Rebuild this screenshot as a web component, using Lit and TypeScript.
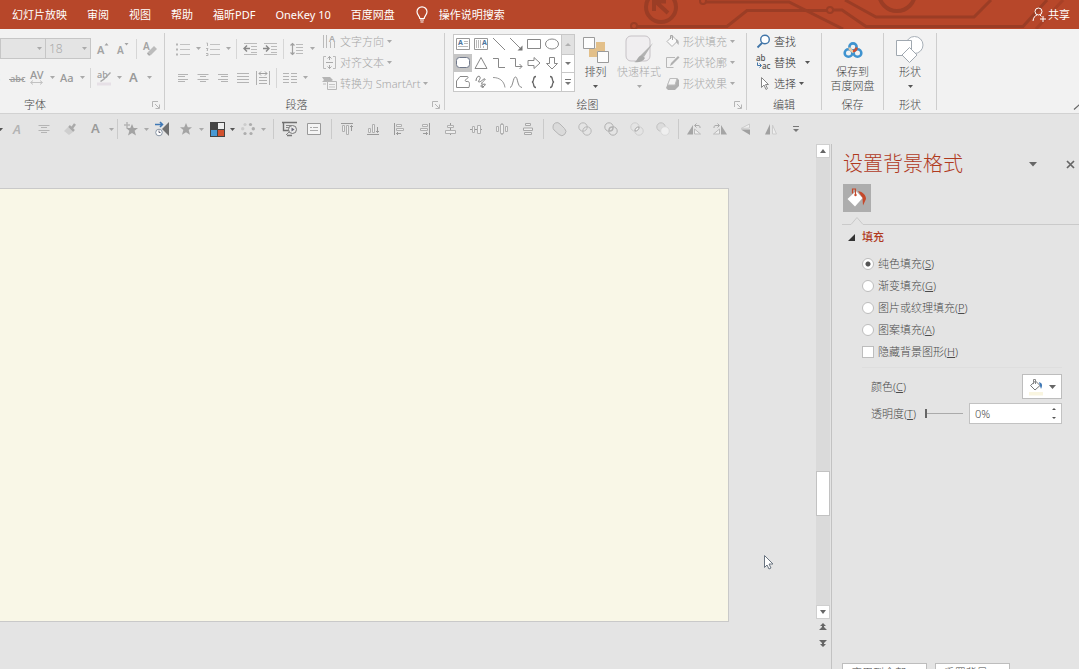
import { LitElement, html, css, svg, nothing, TemplateResult } from "lit";
import { customElement, state } from "lit/decorators.js";
import { classMap } from "lit/directives/class-map.js";

/* Every glyph is drawn on its own small canvas: [width, height, drawing]. */
type Glyph = [number, number, unknown];

const G = "#a3a3a3";
const L = "#c2c2c2";

const glyphs: Record<string, Glyph> = {
  bulb: [14, 18, svg`<path d="M4.8 12.5C4.8 10 2 9 2 5.8A5 5 0 0 1 12 5.800C12 9 9.200 10 9.200 12.500Z" fill="none" stroke="#fff" stroke-width="1.200"/><path d="M5 14h4M5.500 16h3" stroke="#fff" stroke-width="1.200"/>`],
  share: [14, 15, svg`<circle cx="6.500" cy="4.500" r="3.500" fill="none" stroke="#fff"/><path d="M1 14c.5-3.500 2-5.500 4-6M8 8l1.500 1.500M8 12h6M11 9v6" fill="none" stroke="#fff"/>`],
  grow: [14, 14, svg`<text x="1" y="12" font-size="11" font-weight="600" fill="${G}">A</text><path d="M8.500 3.500 10.500 1l2 2.500z" fill="${G}"/>`],
  shrink: [14, 14, svg`<text x="1" y="12" font-size="10" font-weight="600" fill="${G}">A</text><path d="M8.500 1h4l-2 2.500z" fill="${G}"/>`],
  erase: [14, 16, svg`<text x="0" y="9" font-size="10" font-weight="600" fill="${G}">A</text><path d="m5 11 6-6 3 3-6 6z" fill="#bcbcbc"/><path d="m5 11 3 3-2 .8-2-2z" fill="#aaa"/>`],
  shadowS: [10, 14, svg`<text x="2" y="11" font-size="11" font-weight="700" fill="${G}">S</text>`],
  strike: [16, 14, svg`<text x="1" y="11" font-size="9" font-weight="600" fill="${G}">abc</text><path d="M0 8.500h15" stroke="#999"/>`],
  spacing: [16, 16, svg`<text x="1" y="9" font-size="11" font-weight="500" fill="#999">AV</text><path d="M2 12.500h11M4 10.500l-2.500 2 2.500 2M11 10.500l2.500 2-2.500 2" fill="none" stroke="${L}"/>`],
  caseA: [16, 14, svg`<text x="1" y="11" font-size="11" font-weight="500" fill="#999">Aa</text>`],
  highlight: [16, 16, svg`<text x="1" y="8" font-size="9" font-weight="500" fill="#999">ab</text><path d="m4 11 3-2 7-7 1 1-7 7-3 2z" fill="#a8a8a8"/><path d="M1 12.500h14v3H1z" fill="#e6e0e6"/>`],
  fontA: [14, 16, svg`<text x="2" y="12" font-size="13" font-weight="600" fill="#9a9a9a">A</text>`],
  bullets: [16, 14, svg`<path d="M5 2.500h10M5 7.500h10M5 12.500h10" stroke="${L}"/><path d="M1 1.500h2v2H1zM1 6.500h2v2H1zM1 11.500h2v2H1z" fill="#b5b5b5"/>`],
  numbers: [16, 14, svg`<path d="M5 2.500h10M5 7.500h10M5 12.500h10" stroke="${L}"/><path d="M1.500 1h1v3M1 6.500h2l-1 2h1M1 11.500h2v2H1" fill="none" stroke="#b5b5b5"/>`],
  outdent: [15, 12, svg`<path d="M1 .5h13M8 3.500h6M8 6.500h6M8 9.500h6M1 11.500h13" stroke="#bbb"/><path d="M7 5.500H1.500M4 2.500l-3 3 3 3" fill="none" stroke="#888" stroke-width="1.400"/>`],
  indent: [15, 12, svg`<path d="M1 .5h13M8 3.500h6M8 6.500h6M8 9.500h6M1 11.500h13" stroke="#bbb"/><path d="M0 5.500h5.500M3 2.500l3 3-3 3" fill="none" stroke="#888" stroke-width="1.400"/>`],
  lineGap: [14, 14, svg`<path d="M6 2.500h7M6 5.500h7M6 8.500h7M6 11.500h7" stroke="#bbb"/><path d="M2.500 1v12M.5 3.500l2-2 2 2M.5 10.500l2 2 2-2" fill="none" stroke="#a0a0a0" stroke-width="1.200"/>`],
  left: [12, 10, svg`<path d="M1 1.500h10M1 3.500h7M1 6.500h10M1 8.500h7" stroke="#b4b4b4"/>`],
  center: [12, 10, svg`<path d="M.5 1.500h11M3 3.500h6M.5 6.500h11M3 8.500h6" stroke="#b4b4b4"/>`],
  right: [12, 10, svg`<path d="M1 1.500h10M4 3.500h7M1 6.500h10M4 8.500h7" stroke="#b4b4b4"/>`],
  justify: [12, 10, svg`<path d="M0 .5h12M0 3.500h12M0 6.500h12M0 9.500h12" stroke="#b4b4b4"/>`],
  spread: [14, 14, svg`<path d="M.5 0v14M13.500 0v14M3 6.500h8M3 9.500h8M3 12.500h8" stroke="#b0b0b0"/><path d="M3 2.500h8M5 .5l-2 2 2 2M9 .5l2 2-2 2" fill="none" stroke="#a0a0a0"/>`],
  columns: [14, 10, svg`<path d="M0 .5h6M0 3.500h6M0 6.500h6M0 9.500h6M8 .5h6M8 3.500h6M8 6.500h6M8 9.500h6" stroke="#b4b4b4"/>`],
  textDir: [15, 15, svg`<path d="M1.500 1v13M4.500 1v13M8.500 8v6M12.500 8v6" stroke="#bbb"/><text x="7" y="8" font-size="9" font-weight="600" fill="#aaa">A</text>`],
  alignText: [15, 15, svg`<path d="M4 1.500H1.500v12H4M11 1.500h2.500v12H11" fill="none" stroke="#bbb"/><path d="M4 7.500h7M7.500 1v4M7.500 10v4M5.500 3.500l2-2 2 2M5.500 11.500l2 2 2-2" fill="none" stroke="#aaa"/>`],
  smart: [15, 15, svg`<path d="M0 1h8l3 3-3 2H0l2-2z" fill="#b5b5b5"/><path d="M5.500 5.500h9v8h-9z" fill="#f2f2f2" stroke="#b8b8b8"/><path d="M7 8.500h6M7 11h6" stroke="#c5c5c5"/><path d="M1 8h3" fill="none" stroke="#bbb"/>`],
  launch: [8, 8, svg`<path d="M.5 6V.5H6M3 3l4 4M7.500 3.500v4h-4" fill="none" stroke="#b5b5b5"/>`],
  arrange: [26, 27, svg`<path d="M13 5h9v9h-8v6H6v-9h7z" fill="#e3c08a"/><path d="M.5.500h11v11H.5zM14.500 14.500h11v11h-11z" fill="#fdfdfd" stroke="#9b9b9b"/>`],
  quick: [28, 30, svg`<rect x="1" y="1" width="24" height="25" rx="5" fill="#f0eef0" stroke="#c6c2c6"/><path d="m28 8-9 14-3-2z" fill="#b3b3b3"/><path d="M17 20l3 3c-2 4-7 5-11 4 4-1 3-6 8-7z" fill="#ababab"/>`],
  bucket: [15, 15, svg`<path d="M2 7.500 7.500 2l5 5-5.500 5.500z" fill="#fafafa" stroke="#b3b3b3"/><path d="M5.500 5V1.500h2V6" fill="none" stroke="#a8a8a8"/><path d="M11 5c3 1 3 3 2.500 6L11 8z" fill="#b3b3b3"/>`],
  outline: [15, 15, svg`<path d="M10 2.500H1.500v10h7" fill="none" stroke="#b8b8b8"/><path d="m5 11 1-3 7-7 1.500 1.500-7 7z" fill="#b0b0b0"/>`],
  effects: [15, 15, svg`<path d="M5 2h7l2 2v6l-4 4H3l-2-2z" fill="#b0b0b0"/><path d="M5 2.500h7L10 9H2.500z" fill="#f4f4f4" stroke="#bcbcbc"/>`],
  find: [15, 15, svg`<circle cx="9" cy="5.500" r="4.300" fill="#fff" stroke="#4175a8" stroke-width="1.400"/><path d="m6 9-4.500 4.500" stroke="#4175a8" stroke-width="1.800"/>`],
  replace: [15, 15, svg`<text x="0" y="6" font-size="8" font-weight="500" fill="#555">ab</text><text x="6" y="14" font-size="8" font-weight="500" fill="#555">ac</text><path d="M1.500 7.500v3H5M3.500 8.500l2 2-2 2" fill="none" stroke="#4175a8"/>`],
  select: [15, 15, svg`<path d="M5.500 1.500v10l2.500-2.500 2 4.500 1.500-1-2-4h3z" fill="#fff" stroke="#888"/>`],
  cloud: [20, 17, svg`<g fill="none" stroke-width="2.600"><circle cx="5.500" cy="11" r="3.800" stroke="#3f93d0"/><circle cx="14.500" cy="11" r="3.800" stroke="#3f93d0"/><circle cx="10" cy="5" r="3.600" stroke="#3f93d0"/><path d="M6.500 5.500c0 3 3 3 4 5" stroke="#e6c9a4"/><path d="M13.500 5.500c0 2-1.500 3.500-3.500 3.500" stroke="#d2502f"/></g>`],
  shapes: [28, 28, svg`<circle cx="18.500" cy="9" r="8.500" fill="#fff" stroke="#a8b0b8"/><path d="M.5 4.500h15v15H.500z" fill="#fff" stroke="#a0a8b0"/><path d="m13.500 11.500 7.500 7.500-7.500 7.500L6 19z" fill="#fff" stroke="#a0a8b0"/>`],
  /* shape gallery */
  sText: [16, 14, svg`<path d="M1.500 1.500h13v11h-13z" fill="#fff" stroke="#999"/><text x="3" y="8" font-size="7" font-weight="700" fill="#4d759e">A</text><path d="M9 4.500h4M9 6.500h4M3 9.500h10" stroke="#bbb"/>`],
  sVText: [16, 14, svg`<path d="M1.500 1.500h13v11h-13z" fill="#fff" stroke="#999"/><text x="9" y="8" font-size="7" font-weight="700" fill="#4d759e">A</text><path d="M3.500 3v8M5.500 3v8M7.500 3v8M10.500 9v2" stroke="#bbb"/>`],
  sLine: [16, 14, svg`<path d="m2 1 12 12" stroke="#888"/>`],
  sArrow: [16, 14, svg`<path d="m2 1 12 12" stroke="#888"/><path d="M14.500 13.500v-5l-5 5z" fill="#777"/>`],
  sRect: [16, 14, svg`<path d="M1.500 2.500h13v9h-13z" fill="#fff" stroke="#888"/>`],
  sOval: [16, 14, svg`<ellipse cx="8" cy="7" rx="6.500" ry="5" fill="#fff" stroke="#888"/>`],
  sRound: [16, 14, svg`<rect x="1.500" y="1.500" width="13" height="10" rx="3" fill="#fff" stroke="#70788a"/>`],
  sTri: [16, 14, svg`<path d="m8 1.500 6 11H2z" fill="#fff" stroke="#888"/>`],
  sElbow: [16, 14, svg`<path d="M2 2.500h5.500v9H14" fill="none" stroke="#888"/>`],
  sElbowA: [16, 14, svg`<path d="M2 2.500h5.500v8H14M11.500 8l2.500 2.500-2.500 2.500" fill="none" stroke="#888"/>`],
  sRight: [16, 14, svg`<path d="M2 4.500h6V1.500l6 5.500-6 5.500V9.500H2z" fill="#fff" stroke="#888"/>`],
  sDown: [16, 14, svg`<path d="M5.500 1.500h5v6h3L8 13 2.500 7.500h3z" fill="#fff" stroke="#888"/>`],
  sFree: [16, 14, svg`<path d="M5 1.500h7c2 0 1 2-.5 2.500-2 .7-1.500 3 .5 2.500 2.500-.5 3 2 2 6H1.500V6z" fill="#fff" stroke="#888"/>`],
  sScrib: [16, 14, svg`<path d="M3 6c0-4 3-6 4-4S4 7 6 7s5-4 6-3-5 4-3 5 4-1 3 1-4 3-4 1 2-1 2 2" fill="none" stroke="#777"/>`],
  sArc: [16, 14, svg`<path d="M2 2.500c6 0 11 3 12 10" fill="none" stroke="#999"/>`],
  sCurve: [16, 14, svg`<path d="M2 12.500C5 12 5 2 7.500 2S9 12 14 12.500" fill="none" stroke="#888"/>`],
  sLB: [16, 14, svg`<path d="M10 1.500c-4 0-1 5-4 5.500 3 .5 0 5.500 4 5.500" fill="none" stroke="#666" stroke-width="1.300"/>`],
  sRB: [16, 14, svg`<path d="M6 1.500c4 0 1 5 4 5.500-3 .5 0 5.500-4 5.500" fill="none" stroke="#666" stroke-width="1.300"/>`],
  up: [6, 3, svg`<path d="M0 3h6L3 0z" fill="#b0b0b0"/>`],
  down: [6, 3, svg`<path d="M0 0h6L3 3z" fill="#777"/>`],
  more: [6, 6, svg`<path d="M0 .5h6" stroke="#777"/><path d="M0 3h6L3 6z" fill="#777"/>`],
  /* quick access bar */
  qItalic: [16, 16, svg`<text x="3" y="13" font-size="13" font-style="italic" font-weight="600" fill="#b3b3b3">A</text>`],
  qBrush: [14, 14, svg`<path d="m1 9 4-4 5 5-4 3z" fill="#cfcfcf"/><path d="m6 4 5 5M9 6l3-4" stroke="#aaa" stroke-width="2.500"/>`],
  qStarAdd: [16, 16, svg`<path d="m9 3 1.700 4H15l-3.400 2.800 1.400 4.700L9 12l-4 2.500 1.400-4.700L3 7h4.300z" fill="#a3a3a3"/><path d="M4 1v6M1 4h6" stroke="#b5b5b5" stroke-width="1.500"/>`],
  qAnim: [16, 16, svg`<path d="M15 1v14L8 8z" fill="#707070"/><path d="M1 3.500h7M6 1l2.500 2.500L6 6" fill="none" stroke="#3f78b5" stroke-width="1.600"/><circle cx="5" cy="11.500" r="3.300" fill="#fff" stroke="#8895a5"/><path d="M5 9.500v2h1.500" fill="none" stroke="#667"/>`],
  qStar: [14, 14, svg`<path d="m7 1 1.800 4.200H13L9.700 8l1.300 4.800L7 10.200l-4 2.600L4.300 8 1 5.200h4.200z" fill="#a5a5a5"/>`],
  qColors: [15, 15, svg`<path d="M0 0h15v15H0z" fill="#444"/><path d="M8 1h6v6H8z" fill="#eee"/><path d="M1 8h6v6H1z" fill="#4a9ad4"/><path d="M8 8h6v6H8z" fill="#d2522f"/>`],
  qDots: [14, 14, svg`<g fill="#adadad"><circle cx="4" cy="2.500" r="1.600" fill="#ccc"/><circle cx="9.500" cy="2.500" r="1.600"/><circle cx="12.300" cy="6.800" r="1.700"/><circle cx="1.700" cy="6.800" r="1.700" fill="#ccc"/><circle cx="4" cy="11.500" r="1.600"/><circle cx="10" cy="11.500" r="1.600"/></g>`],
  qShow: [16, 16, svg`<path d="M0 1.500h15M1.500 2v7.500h6" fill="none" stroke="#707070" stroke-width="1.400"/><path d="M4 4.500h6M4 6.500h3M4 14l3-3" stroke="#888"/><circle cx="10.500" cy="8.500" r="4" fill="#e8e8e8" stroke="#777"/><path d="m9.500 6.500 3 2-3 2z" fill="#667"/><path d="M5 14.500h5" stroke="#777" stroke-width="1.500"/>`],
  qPane: [14, 12, svg`<path d="M.5.500h13v11H.5z" fill="#f4f4f4" stroke="#999"/><path d="M3 4.500h2M6 4.500h5M3 7.500h8" stroke="#aaa"/>`],
  qTop: [14, 14, svg`<path d="M1 1.500h12" stroke="#999"/><path d="M2.500 3.500h2v6h-2zM6.500 3.500h2v9h-2z" fill="#eee" stroke="#b0b0b0"/><path d="M11.500 9V3.500M10 5l1.500-1.500L13 5" fill="none" stroke="#999"/>`],
  qBottom: [14, 14, svg`<path d="M1 12.500h12" stroke="#999"/><path d="M2.500 6.500h2v4h-2zM6.500 2.500h2v8h-2z" fill="#eee" stroke="#b0b0b0"/><path d="M11.500 5v5.500M10 9l1.500 1.500L13 9" fill="none" stroke="#999"/>`],
  qLeft: [14, 14, svg`<path d="M2.500 1v12" stroke="#999"/><path d="M4.500 2.500h5v2h-5zM4.500 6.500h7v2h-7z" fill="#eee" stroke="#b0b0b0"/><path d="M9 11.500H4.500M6 10l-1.500 1.500L6 13" fill="none" stroke="#999"/>`],
  qRight: [14, 14, svg`<path d="M11.500 1v12" stroke="#999"/><path d="M4.500 2.500h5v2h-5zM2.500 6.500h7v2h-7z" fill="#eee" stroke="#b0b0b0"/><path d="M5 11.500h4.500M8 10l1.500 1.500L8 13" fill="none" stroke="#999"/>`],
  qMidH: [14, 14, svg`<path d="M7.500 1v12" stroke="#999"/><path d="M4.500 3.500h6v2h-6zM2.500 8.500h10v3h-10z" fill="#eee" stroke="#b0b0b0"/>`],
  qMidV: [14, 14, svg`<path d="M1 7.500h12" stroke="#999"/><path d="M3.500 4.500h2v6h-2zM8.500 3.500h3v8h-3z" fill="#eee" stroke="#b0b0b0"/>`],
  qDistH: [14, 14, svg`<path d="M5.500 2.500h3v9h-3zM1.500 4.500h2v5h-2zM10.500 4.500h2v5h-2z" fill="#eee" stroke="#b0b0b0"/><path d="M7 1v1M7 12v1" stroke="#999"/>`],
  qDistV: [14, 14, svg`<path d="M4.500 1.500h5v2h-5zM2.500 6h9v2.500h-9zM3.500 10.500h7v2h-7z" fill="#eee" stroke="#a8a8a8"/>`],
  mUnion: [14, 14, svg`<path d="M1 5a4 4 0 0 1 7-3l4.500 4.500A4 4 0 0 1 7 12.500L2 8A4 4 0 0 1 1 5z" fill="#dadada" stroke="#b5b5b5"/>`],
  mCombine: [14, 14, svg`<g fill="none" stroke="#b8b8b8"><circle cx="5" cy="5" r="4.200"/><circle cx="9" cy="9" r="4.200"/></g>`],
  mFragment: [14, 14, svg`<g fill="none" stroke="#b0b0b0"><circle cx="5" cy="5" r="4.200"/><circle cx="9" cy="9" r="4.200"/><circle cx="7" cy="7" r="2"/></g>`],
  mIntersect: [14, 14, svg`<g fill="none" stroke="#cecece"><circle cx="5" cy="5" r="4.200"/><circle cx="9" cy="9" r="4.200"/></g><path d="M5 9c0-2.500 1.500-4 4-4 0 2.500-1.500 4-4 4z" fill="#f5f5f5" stroke="#aaa"/>`],
  mSubtract: [14, 14, svg`<circle cx="5" cy="5" r="4.200" fill="#dcdcdc" stroke="#c2c2c2"/><circle cx="9" cy="9" r="4.300" fill="#efefef" stroke="#dadada"/>`],
  rotL: [16, 14, svg`<path d="M1 12.500 7 3v9.500z" fill="#a5a5a5"/><path d="M8.500 12V7l6 5z" fill="#efefef" stroke="#bbb"/><path d="M9 3.500h3c2 0 2 1 2 2.500M10.500 1.500l-2 2 2 2" fill="none" stroke="#aaa"/>`],
  rotR: [16, 14, svg`<path d="M15 12.500 9 3v9.500z" fill="#a5a5a5"/><path d="M7.500 12V7l-6 5z" fill="#efefef" stroke="#bbb"/><path d="M2 6c0-1.500 0-2.500 2-2.500h3M5.500 1.500l2 2-2 2" fill="none" stroke="#aaa"/>`],
  flipV: [14, 14, svg`<path d="M11.500 2v4L3 6.500z" fill="#eee" stroke="#ccc"/><path d="M12 13V7.500H3z" fill="#a0a0a0"/>`],
  flipH: [14, 14, svg`<path d="M6 2v10.500H1z" fill="#a0a0a0"/><path d="M8.500 3v9h4z" fill="#eee" stroke="#ccc"/>`],
  dblUp: [8, 8, svg`<path d="M4 0 7 3H5v1h0l3 3H0l3-3V3H1z" fill="#666"/>`],
  dblDown: [8, 8, svg`<path d="M4 8 7 5H5V4l3-3H0l3 3v1H1z" fill="#666"/>`],
  cross: [9, 9, svg`<path d="m1 1 7 7M8 1 1 8" stroke="#666" stroke-width="1.700"/>`],
  bigDown: [8, 5, svg`<path d="M0 0h8L4 4.500z" fill="#666"/>`],
  paint: [20, 20, svg`<path d="M11 3c5 1 8 4 8 8l-3 6.500-.500-7.500z" fill="#c5482a"/><path d="M.5 11 9 3l6.500 7L8 18.500z" fill="#fff"/><path d="M5.500 5.500V1h3v5" fill="none" stroke="#c5482a" stroke-width="1.200"/><circle cx="8.500" cy="7" r="1.200" fill="#c5482a"/>`],
  fillColor: [16, 18, svg`<path d="M2.500 7.500 7.500 3l4.500 4.500L7 12z" fill="#fff" stroke="#777"/><path d="M5.500 6V1.500h2V6" fill="none" stroke="#888"/><path d="M11 4c3 1 4 3 2 7l-1-3z" fill="#3f78b5"/><path d="M1 14h14v3.500H1z" fill="#f9f5e0"/>`],
  fold: [7, 7, svg`<path d="M7 0v7H0z" fill="#333"/>`],
  collapse: [10, 6, svg`<path d="m1 5.500 5-4.500 5 4.500" fill="none" stroke="#666" stroke-width="1.200"/>`],
};

const icon = (name: string) => {
  const [w, h, art] = glyphs[name];
  return html`<svg width=${w} height=${h} viewBox="0 0 ${w} ${h}" aria-hidden="true">${art}</svg>`;
};

const caret = (dark = false) => html`<span class=${classMap({ caret: true, dark })}>
  <svg width="5" height="3" viewBox="0 0 5 3" aria-hidden="true"><path d="M0 0h5L2.500 3z" fill="currentColor" /></svg>
</span>`;

const base = css`
  :host, * { box-sizing: border-box; }
  svg { display: block; flex: none; overflow: visible; }
  svg text { font-family: "Noto Sans", sans-serif; }
  button, input, select { font: inherit; color: inherit; margin: 0; padding: 0; border: 0; background: none; }
  button { display: flex; align-items: center; justify-content: center; flex: none; white-space: nowrap; }
  .caret { display: flex; justify-content: center; flex: none; width: 10px; color: #aaa; }
  .caret.dark { color: #555; }
`;

@customElement("title-tabs")
class TitleTabs extends LitElement {
  static styles = [base, css`
    :host { display: block; position: relative; background: #b7472a; color: #fff; overflow: hidden; height: 29px; font-weight: 400; }
    .art { position: absolute; right: 0; top: 0; }
    nav { position: relative; display: flex; align-items: center; height: 29px; padding: 0 9px 0 12px; gap: 20px; }
    .tell { gap: 10px; }
    .share { margin-left: auto; gap: 2px; }
  `];
  render() {
    return html`
      <svg class="art" width="459" height="29" viewBox="0 0 459 29" fill="none" stroke="#9b3d25" stroke-width="3" aria-hidden="true">
        <circle cx="41" cy="7" r="15" stroke-width="4" />
        <path d="m48 13-13-12M34 11V1.500h12" stroke-width="4" />
        <circle cx="14" cy="26" r="3" stroke-width="2" /><path d="M17 26.500h90l20-16h80" />
        <circle cx="83" cy="1" r="3" stroke-width="2" /><path d="M86 2h83l54 27" />
        <circle cx="210" cy="10" r="3" stroke-width="2" /><path d="M213 10h9l24 16.500h157L427 0" />
        <path d="M225 0l31 17h98l17-17" />
        <circle cx="277" cy="-7" r="18" stroke-width="4" />
        <path d="m416 29 27-29" stroke="#a84026" />
      </svg>
      <nav>
        ${["幻灯片放映", "审阅", "视图", "帮助", "福昕PDF", "OneKey 10", "百度网盘"].map((t) => html`<button>${t}</button>`)}
        <button class="tell">${icon("bulb")}操作说明搜索</button>
        <button class="share">${icon("share")}共享</button>
      </nav>`;
  }
}

@customElement("ribbon-bar")
class RibbonBar extends LitElement {
  static styles = [base, css`
    :host { display: flex; height: 85px; background: #f2f2f2; border-bottom: 1px solid #d2d2d2; color: #444; }
    section { display: flex; flex-direction: column; position: relative; flex: none; padding-right: 1px; }
    section::after { content: ""; position: absolute; right: 0; top: 4px; bottom: 3px; width: 1px; background: #cecece; }
    .body { display: flex; height: 67px; }
    footer { display: flex; align-items: center; height: 17px; padding: 0 4px; }
    h3 { flex: 1; margin: 0; font: inherit; text-align: center; }
    h3.shift { padding-right: 8px; }
    .font { width: 165px; overflow: hidden; }
    .font h3 { text-align: left; padding-left: 20px; }
    .para { width: 280px; }
    .draw { width: 302px; }
    .edit { width: 75px; }
    .save { width: 62px; }
    .form { width: 53px; }
    .rows { display: flex; flex-direction: column; gap: 8px; padding-top: 9px; }
    .para .rows { padding-left: 8px; width: 157px; }
    .row { display: flex; align-items: center; height: 21px; }
    .cut { margin-left: -13px; }
    .row button { width: 20px; height: 20px; }
    .sep { width: 1px; height: 20px; margin: 0 3px; background: #d6d6d6; }
    .combo { position: relative; display: flex; align-items: center; width: 46px; height: 21px; margin-right: -1px; border: 1px solid #c6c6c6; background: #e4e4e4; }
    .combo + .combo { margin-right: 2px; }
    .combo select { appearance: none; width: 100%; padding-left: 3px; color: #aaa; opacity: 1; font-size: 12px; }
    .combo .caret { position: absolute; right: 1px; }
    .list { padding-top: 2px; color: #a6a6a6; }
    .list button { height: 21px; gap: 3px; }
    .list .caret { width: 8px; margin-left: -2px; }
    .draw .list { padding-left: 3px; }
    .edit .list { padding-left: 9px; color: #333; }
    .wide .caret { margin-left: 4px; }
    .gallery { display: flex; width: 122px; height: 58px; margin: 5px 0 0 8px; border: 1px solid #c8c8c8; background: #fff; }
    .cells { flex: 1; display: grid; grid-template-columns: repeat(6, 1fr); grid-template-rows: repeat(3, 1fr); }
    .cells button { width: auto; }
    .cells .on { background: #c6c6c6; }
    .scroll { display: grid; grid-template-rows: repeat(3, 1fr); width: 13px; border-left: 1px solid #c8c8c8; }
    .scroll button + button { border-top: 1px solid #c8c8c8; }
    .scroll .off { background: #e1e1e1; }
    .tall { flex-direction: column; justify-content: flex-start; width: 41px; padding-top: 6px; line-height: 14px; }
    .tall .pic { display: flex; align-items: center; justify-content: center; height: 30px; }
    .tall .caret { height: 15px; align-items: center; }
    .tall.dim { width: 46px; color: #aaa; }
    .save .tall, .form .tall { width: 100%; }
    .fold { margin: auto 0 3px auto; width: 6px; overflow: hidden; justify-content: flex-start; }
  `];

  private btn(name: string, more = false) {
    return html`<button aria-label=${name}>${icon(name)}</button>${more ? caret() : nothing}`;
  }
  private item(name: string, label: string, arrow = true, dark = false, cls = "") {
    return html`<button class=${cls}>${icon(name)}<span>${label}</span>${arrow ? caret(dark) : nothing}</button>`;
  }
  private group(cls: string, title: string, body: TemplateResult, launch = false) {
    return html`<section class=${cls}>
      <div class="body">${body}</div>
      <footer><h3 class=${classMap({ shift: launch })}>${title}</h3>${launch ? html`<button aria-label="${title}选项">${icon("launch")}</button>` : nothing}</footer>
    </section>`;
  }
  render() {
    const cells = ["sText", "sVText", "sLine", "sArrow", "sRect", "sOval", "sRound", "sTri", "sElbow", "sElbowA", "sRight", "sDown", "sFree", "sScrib", "sArc", "sCurve", "sLB", "sRB"];
    const sep = html`<i class="sep"></i>`;
    return html`
      ${this.group("font", "字体", html`<div class="rows">
        <div class="row">
          <span class="combo"><select aria-label="字体" disabled><option></option></select>${caret()}</span>
          <span class="combo"><select aria-label="字号" disabled><option>18</option></select>${caret()}</span>
          ${this.btn("grow")}${this.btn("shrink")}${sep}${this.btn("erase")}
        </div>
        <div class="row cut">${this.btn("shadowS")}${this.btn("strike")}${this.btn("spacing", true)}${this.btn("caseA", true)}${sep}${this.btn("highlight", true)}${this.btn("fontA", true)}</div>
      </div>`, true)}
      ${this.group("para", "段落", html`
        <div class="rows">
          <div class="row">${this.btn("bullets", true)}${this.btn("numbers", true)}${sep}${this.btn("outdent")}${this.btn("indent")}${sep}${this.btn("lineGap", true)}</div>
          <div class="row">${["left", "center", "right", "justify", "spread"].map((n) => this.btn(n))}${sep}${this.btn("columns", true)}</div>
        </div>
        <div class="list">${this.item("textDir", "文字方向")}${this.item("alignText", "对齐文本")}${this.item("smart", "转换为 SmartArt")}</div>`, true)}
      ${this.group("draw", "绘图", html`
        <div class="gallery">
          <div class="cells">${cells.map((n) => html`<button aria-label=${n} class=${classMap({ on: n === "sRound" })}>${icon(n)}</button>`)}</div>
          <div class="scroll"><button class="off" aria-label="上一行">${icon("up")}</button><button aria-label="下一行">${icon("down")}</button><button aria-label="其他">${icon("more")}</button></div>
        </div>
        <button class="tall"><span class="pic">${icon("arrange")}</span>排列${caret(true)}</button>
        <button class="tall dim"><span class="pic">${icon("quick")}</span>快速样式${caret()}</button>
        <div class="list">${this.item("bucket", "形状填充")}${this.item("outline", "形状轮廓")}${this.item("effects", "形状效果")}</div>`, true)}
      ${this.group("edit", "编辑", html`<div class="list">
        ${this.item("find", "查找", false)}${this.item("replace", "替换", true, true, "wide")}${this.item("select", "选择", true, true)}</div>`)}
      ${this.group("save", "保存", html`<button class="tall"><span class="pic">${icon("cloud")}</span>保存到<br />百度网盘</button>`)}
      ${this.group("form", "形状", html`<button class="tall"><span class="pic">${icon("shapes")}</span>形状${caret(true)}</button>`)}
      <button class="fold" aria-label="折叠功能区">${icon("collapse")}</button>`;
  }
}

@customElement("quick-bar")
class QuickBar extends LitElement {
  static styles = [base, css`
    :host { display: flex; align-items: center; height: 30px; overflow: hidden; background: #e4e4e4; }
    .set { display: flex; align-items: center; flex: none; padding: 0 3px; height: 20px; }
    .set + .set { border-left: 1px solid #cacaca; }
    button { width: 24px; height: 22px; }
    .caret { width: 7px; }
    .first { gap: 2px; padding: 0 2px 0 0; margin-left: -3px; }
    .first button + .caret { margin-left: -2px; }
    .anim { padding: 0 6px 0 1px; }
    .show { padding: 0 5px 0 4px; }
    .align { width: 212px; justify-content: space-between; }
    .merge { width: 135px; justify-content: space-between; }
    .turn { width: 108px; justify-content: space-between; }
    .end { width: 20px; }
  `];
  private btns(names: string[]) {
    return names.map((n) => html`<button aria-label=${n}>${icon(n)}</button>`);
  }
  render() {
    return html`
      <div class="set first">${caret(true)}${this.btns(["qItalic", "center", "qBrush", "fontA"])}${caret()}</div>
      <div class="set anim">${this.btns(["qStarAdd"])}${caret()}${this.btns(["qAnim", "qStar"])}${caret()}${this.btns(["qColors"])}${caret(true)}${this.btns(["qDots"])}${caret()}</div>
      <div class="set show">${this.btns(["qShow", "qPane"])}</div>
      <div class="set align">${this.btns(["qTop", "qBottom", "qLeft", "qRight", "qMidH", "qMidV", "qDistH", "qDistV"])}</div>
      <div class="set merge">${this.btns(["mUnion", "mCombine", "mFragment", "mIntersect", "mSubtract"])}</div>
      <div class="set turn">${this.btns(["rotL", "rotR", "flipV", "flipH"])}</div>
      <button class="end" aria-label="自定义">${icon("more")}</button>`;
  }
}

@customElement("slide-stage")
class SlideStage extends LitElement {
  static styles = [base, css`
    :host { display: flex; flex: 1; min-width: 0; position: relative; }
    .desk { flex: 1; display: flex; padding: 44px 87px 47px 0; }
    .slide { flex: 1; background: #f9f7e7; border: 1px solid #c9c9c9; border-left: 0; }
    .bar { display: flex; flex-direction: column; align-items: center; width: 15px; padding: 0 1px 18px 0; }
    .track { flex: 1; display: flex; flex-direction: column; width: 14px; background: #dadada; }
    .track button { height: 14px; border: 1px solid #cfcfcf; background: #fff; }
    .before { flex: 313; }
    .after { flex: 89; }
    .thumb { height: 45px; background: #fff; border: 1px solid #c2c2c2; }
    .jump { height: 16px; }
    .pointer { position: absolute; left: 764px; top: 411px; }
  `];
  render() {
    return html`
      <div class="desk"><div class="slide"></div></div>
      <div class="bar">
        <div class="track">
          <button aria-label="向上"><svg width="6" height="4" viewBox="0 0 6 4"><path d="M0 4h6L3 0z" fill="#666" /></svg></button>
          <div class="before"></div><div class="thumb"></div><div class="after"></div>
          <button aria-label="向下"><svg width="6" height="4" viewBox="0 0 6 4"><path d="M0 0h6L3 4z" fill="#666" /></svg></button>
        </div>
        <button class="jump" aria-label="上一张">${icon("dblUp")}</button>
        <button class="jump" aria-label="下一张">${icon("dblDown")}</button>
      </div>
      <svg class="pointer" width="10" height="15" viewBox="0 0 10 15"><path d="M.5.500v12L3 10l2 4 2-1-2-4h4z" fill="#fff" stroke="#6a7480" /></svg>`;
  }
}

@customElement("format-pane")
class FormatPane extends LitElement {
  @state() private fill = "S";
  static styles = [base, css`
    :host { display: flex; flex-direction: column; flex: none; width: 248px; border-left: 1px solid #c2c2c2; color: #4a4a4a; padding-left: 10px; }
    header { display: flex; align-items: center; height: 40px; padding: 0 4px 0 1px; }
    h2 { flex: 1; margin: 0; font-size: 20px; line-height: 24px; font-weight: 300; color: #b03a1e; white-space: nowrap; }
    header button { width: 10px; height: 16px; margin-left: 27px; }
    .tab { width: 28px; height: 28px; margin-left: 1px; background: #adadad; }
    .rule { display: block; width: 100%; height: 9px; margin-top: 4px; overflow: hidden; }
    .body { padding: 2px 17px 0 20px; }
    h3 { display: flex; align-items: center; gap: 7px; height: 20px; margin: 0 0 6px -14px; font-size: 11px; font-weight: 500; color: #b03a1e; }
    .opt { display: flex; align-items: center; gap: 4px; height: 22px; }
    .opt input { appearance: none; flex: none; width: 12px; height: 12px; border: 1px solid #bdbdbd; background: #fff; }
    .opt input[type="radio"] { border-radius: 50%; }
    .opt input[type="radio"]:checked { background: radial-gradient(circle, #555 2px, #fff 3px); }
    hr { margin: 4px 0 6px; border: 0; border-top: 1px solid #dedede; }
    .line { display: flex; align-items: center; padding-left: 9px; height: 25px; margin-bottom: 2px; }
    .color { margin-left: auto; width: 40px; height: 25px; gap: 5px; border: 1px solid #bdbdbd; background: #fff; }
    .range { appearance: none; flex: 1; min-width: 0; height: 12px; margin: 0 6px 0 9px; background: linear-gradient(#aaa, #aaa) center / 100% 1px no-repeat; }
    .range::-webkit-slider-thumb { appearance: none; width: 2px; height: 9px; background: #666; }
    .num { display: flex; width: 93px; height: 21px; border: 1px solid #c2c2c2; background: #fff; }
    .num input { flex: 1; min-width: 0; padding-left: 5px; }
    .spin { display: flex; flex-direction: column; width: 14px; }
    .spin button { flex: 1; }
    .foot { display: flex; gap: 8px; height: 6px; margin-top: auto; overflow: hidden; }
    .foot button { height: 24px; border: 1px solid #bdbdbd; background: #fff; padding: 2px 8px 0; line-height: 14px; align-items: flex-start; }
  `];
  render() {
    const opts = [["纯色填充", "S"], ["渐变填充", "G"], ["图片或纹理填充", "P"], ["图案填充", "A"]];
    return html`
      <header><h2>设置背景格式</h2><button aria-label="任务窗格选项">${icon("bigDown")}</button><button aria-label="关闭">${icon("cross")}</button></header>
      <button class="tab" aria-label="填充">${icon("paint")}</button>
      <svg class="rule" viewBox="0 0 237 9" preserveAspectRatio="xMinYMin slice" aria-hidden="true"><path d="M0 8.500h9l6-7 6 7h900" fill="none" stroke="#cacaca" /></svg>
      <div class="body">
        <h3>${icon("fold")}填充</h3>
        ${opts.map(([t, k]) => html`<label class="opt"><input type="radio" name="fill" .checked=${this.fill === k} @change=${() => (this.fill = k)} /><span>${t}(<u>${k}</u>)</span></label>`)}
        <label class="opt"><input type="checkbox" /><span>隐藏背景图形(<u>H</u>)</span></label>
        <hr />
        <div class="line"><label for="color">颜色(<u>C</u>)</label><button class="color" id="color">${icon("fillColor")}<svg width="7" height="4" viewBox="0 0 7 4"><path d="M0 0h7L3.500 4z" fill="#666" /></svg></button></div>
        <div class="line"><label for="alpha">透明度(<u>T</u>)</label>
          <input class="range" type="range" aria-label="透明度" min="0" max="100" value="0" />
          <span class="num"><input id="alpha" type="text" value="0%" />
            <span class="spin">
              <button aria-label="增加"><svg width="4" height="2" viewBox="0 0 4 2"><path d="M0 2h4L2 0z" fill="#555" /></svg></button>
              <button aria-label="减少"><svg width="4" height="2" viewBox="0 0 4 2"><path d="M0 0h4L2 2z" fill="#555" /></svg></button>
            </span></span>
        </div>
      </div>
      <div class="foot"><button>应用到全部(<u>L</u>)</button><button>重置背景(<u>B</u>)</button></div>`;
  }
}

@customElement("app-root")
class AppRoot extends LitElement {
  static styles = css`
    :host { display: flex; flex-direction: column; height: 100vh; overflow: hidden; background: #e4e4e4;
      font: 300 11px/16px "Noto Sans", "Noto Sans CJK SC", sans-serif; cursor: default; }
    main { flex: 1; display: flex; min-height: 0; }
  `;
  render() {
    return html`<title-tabs></title-tabs><ribbon-bar></ribbon-bar><quick-bar></quick-bar>
      <main><slide-stage></slide-stage><format-pane></format-pane></main>`;
  }
}
